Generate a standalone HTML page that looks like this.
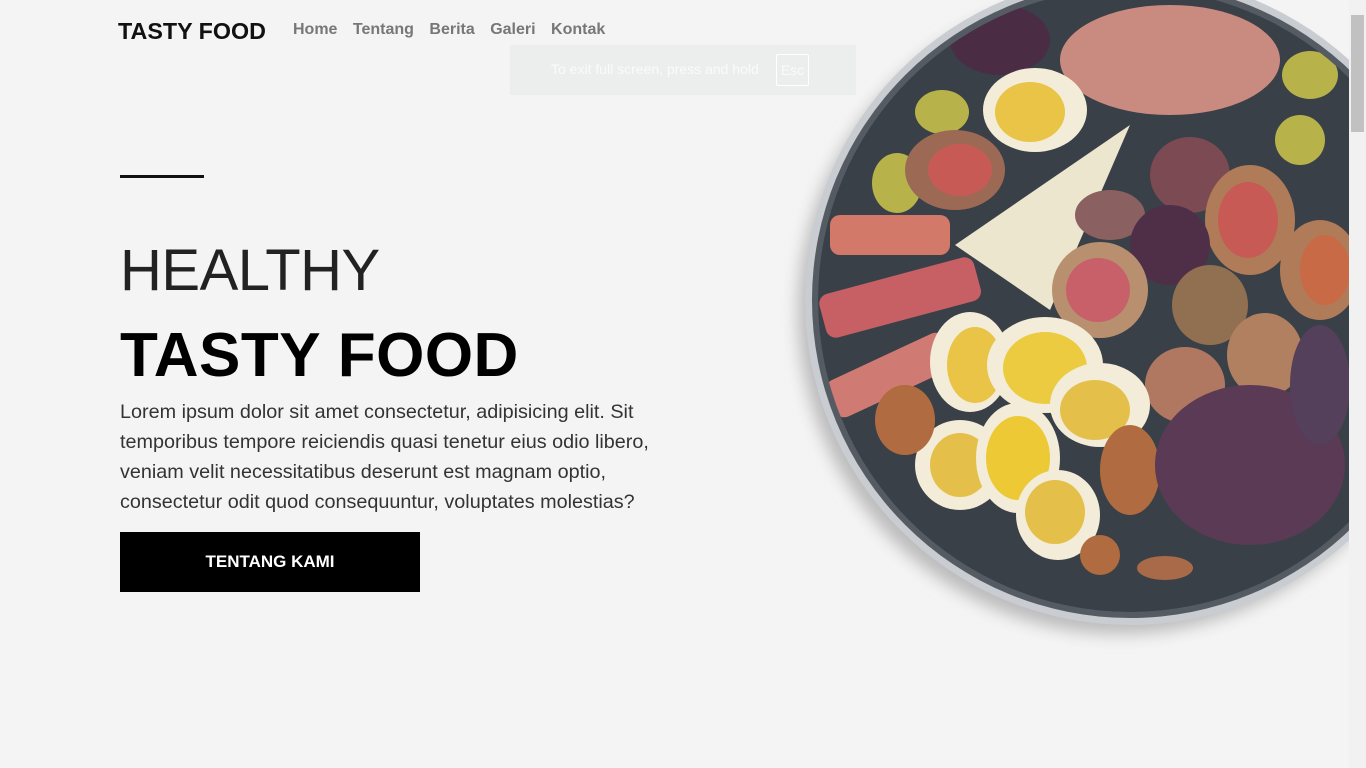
<!DOCTYPE html>
<html><head><meta charset="utf-8"><style>
body{margin:0;width:1366px;height:768px;background:#f4f4f4;overflow:hidden;position:relative;font-family:"Liberation Sans",sans-serif}
.logo{position:absolute;left:118px;top:18px;font-size:23.3px;font-weight:bold;color:#111}
.nav{position:absolute;left:293px;top:21px;font-size:16px;font-weight:bold;color:#777;word-spacing:0}
.nav span{margin-right:11px}
.toast{position:absolute;left:510px;top:45px;width:346px;height:50px;background:#eceeee;color:#fafafa;font-size:14px}
.toast .t{position:absolute;left:41px;top:16px}
.toast .k{position:absolute;left:266px;top:9px;width:31px;height:30px;border:1px solid #fff;border-radius:2px;text-align:center;line-height:30px}
.line{position:absolute;left:120px;top:175px;width:84px;height:3px;background:#111}
.h1{position:absolute;left:120px;top:237px;font-size:58px;color:#222;font-weight:normal;letter-spacing:-0.5px}
.h2{position:absolute;left:120px;top:320px;font-size:62px;font-weight:900;color:#000;letter-spacing:0.5px}
.p{position:absolute;left:120px;top:397px;width:560px;font-size:19.8px;line-height:30px;color:#333}
.btn{position:absolute;left:120px;top:532px;width:300px;height:60px;background:#000;color:#fff;font-weight:bold;font-size:17px;text-align:center;line-height:60px}
.sb{position:absolute;left:1349px;top:0;width:17px;height:768px;background:#f1f1f1}
.th{position:absolute;left:1351px;top:15px;width:13px;height:117px;background:#c1c1c1}
</style></head><body>
<svg style="position:absolute;left:0;top:0" width="1366" height="768">
<defs><clipPath id="c"><circle cx="1130" cy="300" r="312"/></clipPath>
<filter id="b"><feGaussianBlur stdDeviation="8"/></filter></defs>
<circle cx="1120" cy="312" r="322" fill="#bbb" filter="url(#b)"/>
<circle cx="1130" cy="300" r="325" fill="#c9ccd0"/>
<circle cx="1130" cy="300" r="318" fill="#555b63"/>
<g clip-path="url(#c)">
<circle cx="1130" cy="300" r="312" fill="#3a4048"/>
<ellipse cx="1170" cy="60" rx="110" ry="55" fill="#c98a80"/>
<ellipse cx="1000" cy="40" rx="50" ry="35" fill="#4a2d44"/>
<ellipse cx="1035" cy="110" rx="52" ry="42" fill="#f2ecd8"/><ellipse cx="1030" cy="112" rx="35" ry="30" fill="#e9c447"/>
<ellipse cx="942" cy="112" rx="27" ry="22" fill="#b8b24a"/>
<ellipse cx="897" cy="183" rx="25" ry="30" fill="#b8b24a"/>
<ellipse cx="955" cy="170" rx="50" ry="40" fill="#9c6a54"/><ellipse cx="960" cy="170" rx="32" ry="26" fill="#c85a55"/>
<polygon points="955,245 1130,125 1050,310" fill="#ece6cf"/>
<rect x="830" y="215" width="120" height="40" rx="10" fill="#d2796a"/>
<rect x="820" y="275" width="160" height="45" rx="10" fill="#c76065" transform="rotate(-15 900 297)"/>
<rect x="825" y="355" width="130" height="40" rx="10" fill="#d07a74" transform="rotate(-25 890 375)"/>
<ellipse cx="1310" cy="75" rx="28" ry="24" fill="#b8b24a"/><ellipse cx="1300" cy="140" rx="25" ry="25" fill="#b8b24a"/>
<ellipse cx="1190" cy="175" rx="40" ry="38" fill="#7b4a52"/>
<ellipse cx="1250" cy="220" rx="45" ry="55" fill="#b07b58"/><ellipse cx="1248" cy="220" rx="30" ry="38" fill="#c85a55"/>
<ellipse cx="1110" cy="215" rx="35" ry="25" fill="#8a6060"/>
<ellipse cx="1170" cy="245" rx="40" ry="40" fill="#4f2f48"/>
<ellipse cx="1100" cy="290" rx="48" ry="48" fill="#b89070"/><ellipse cx="1098" cy="290" rx="32" ry="32" fill="#c8606a"/>
<ellipse cx="1320" cy="270" rx="40" ry="50" fill="#b07b58"/><ellipse cx="1325" cy="270" rx="25" ry="35" fill="#c86a45"/>
<ellipse cx="1210" cy="305" rx="38" ry="40" fill="#907050"/>
<ellipse cx="1265" cy="355" rx="38" ry="42" fill="#b08060"/>
<ellipse cx="1185" cy="385" rx="40" ry="38" fill="#b07860"/>
<ellipse cx="970" cy="362" rx="40" ry="50" fill="#f2ecd8"/><ellipse cx="975" cy="365" rx="28" ry="38" fill="#e9c447"/>
<ellipse cx="1045" cy="365" rx="58" ry="48" fill="#f2ecd8"/><ellipse cx="1045" cy="368" rx="42" ry="36" fill="#eccb40"/>
<ellipse cx="1100" cy="405" rx="50" ry="42" fill="#f2ecd8"/><ellipse cx="1095" cy="410" rx="35" ry="30" fill="#e4c04a"/>
<ellipse cx="960" cy="465" rx="45" ry="45" fill="#f2ecd8"/><ellipse cx="960" cy="465" rx="30" ry="32" fill="#e4c04a"/>
<ellipse cx="1018" cy="458" rx="42" ry="55" fill="#f2ecd8"/><ellipse cx="1018" cy="458" rx="32" ry="42" fill="#ecc935"/>
<ellipse cx="1058" cy="515" rx="42" ry="45" fill="#f2ecd8"/><ellipse cx="1055" cy="512" rx="30" ry="32" fill="#e4c04a"/>
<ellipse cx="905" cy="420" rx="30" ry="35" fill="#b06c40"/>
<ellipse cx="1130" cy="470" rx="30" ry="45" fill="#b06c40"/>
<ellipse cx="1250" cy="465" rx="95" ry="80" fill="#5a3a55"/>
<ellipse cx="1320" cy="385" rx="30" ry="60" fill="#54405a"/>
<ellipse cx="1100" cy="555" rx="20" ry="20" fill="#b06c40"/>
<ellipse cx="1165" cy="568" rx="28" ry="12" fill="#a86a48"/>
</g>
</svg>
<div class="logo">TASTY FOOD</div>
<div class="nav"><span>Home</span> <span>Tentang</span> <span>Berita</span> <span>Galeri</span> <span>Kontak</span></div>
<div class="toast"><span class="t">To exit full screen, press and hold</span><span class="k">Esc</span></div>
<div class="line"></div>
<div class="h1">HEALTHY</div>
<div class="h2">TASTY FOOD</div>
<div class="p">Lorem ipsum dolor sit amet consectetur, adipisicing elit. Sit temporibus tempore reiciendis quasi tenetur eius odio libero, veniam velit necessitatibus deserunt est magnam optio, consectetur odit quod consequuntur, voluptates molestias?</div>
<div class="btn">TENTANG KAMI</div>
<div class="sb"></div><div class="th"></div>
</body></html>
